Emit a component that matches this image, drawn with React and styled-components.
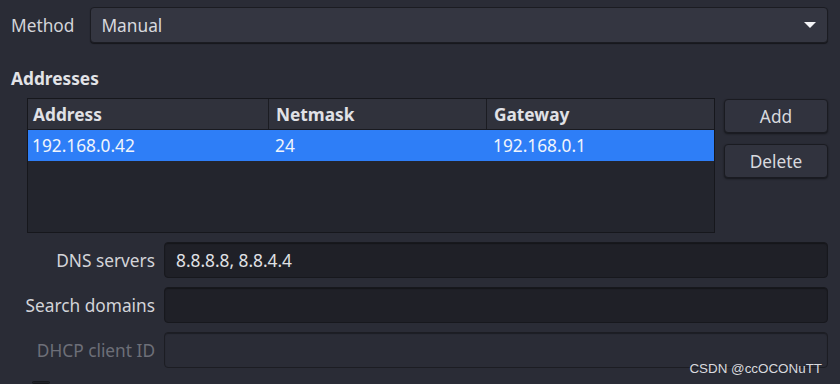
import React from 'react'
import styled, {createGlobalStyle} from 'styled-components'

const GlobalStyle = createGlobalStyle`
  html, body {
    margin: 0;
    padding: 0;
    background: #2a2c36;
  }
  * { box-sizing: border-box; }
`;

const Page = styled.div`
  position: relative;
  width: 840px;
  height: 384px;
  overflow: hidden;
  background: #2a2c36;
  color: #d6d7dc;
  font-family: "Noto Sans", "Open Sans", sans-serif;
  font-size: 17.3px;
  padding: 7px 12px 0 11px;
  display: flex;
  flex-direction: column;
`;

const MethodRow = styled.div`
  display: flex;
  flex-direction: row;
  align-items: center;
  gap: 16px;
`;

const Label = styled.span`
  color: ${p => (p.disabled ? '#6d6f78' : '#d3d4d9')};
  white-space: nowrap;
`;

const Combo = styled.div`
  flex: 1;
  height: 36px;
  display: flex;
  align-items: center;
  justify-content: space-between;
  padding: 0 10px;
  background: #343641;
  border: 1px solid #1b1c22;
  border-radius: 4px;
  box-shadow: 0 1px 1px rgba(0, 0, 0, 0.5);
  color: #d8d9de;
`;

const Arrow = styled.svg`
  width: 14px;
  height: 8px;
`;

const SectionTitle = styled.div`
  margin-top: 24px;
  font-weight: bold;
  color: #e2e3e7;
  line-height: 23px;
`;

const AddressArea = styled.div`
  display: flex;
  flex-direction: row;
  gap: 9px;
  margin-top: 8px;
  padding-left: 16px;
`;

const Table = styled.div`
  width: 688px;
  height: 135px;
  background: #23252d;
  border: 1px solid #16171c;
  display: flex;
  flex-direction: column;
`;

const HeaderRow = styled.div`
  display: grid;
  grid-template-columns: 240px 218px 1fr;
  height: 31px;
  background: #30323c;
  border-bottom: 1px solid #191a20;
`;

const HeaderCell = styled.div`
  display: flex;
  align-items: center;
  font-weight: bold;
  color: #e0e1e6;
  border-left: ${p => (p.first ? 'none' : '1px solid #1b1c22')};
  padding-left: ${p => (p.first ? '5px' : '7px')};
`;

const DataRow = styled.div`
  display: grid;
  grid-template-columns: 240px 218px 1fr;
  height: 31px;
  background: ${p => (p.selected ? '#2e7ef7' : 'transparent')};
  color: ${p => (p.selected ? '#f0f4fb' : '#d6d7dc')};
`;

const Cell = styled.div`
  display: flex;
  align-items: center;
  padding-left: ${p => (p.first ? '4px' : '7px')};
`;

const ButtonColumn = styled.div`
  display: flex;
  flex-direction: column;
  gap: 11px;
  padding-top: 1px;
`;

const Button = styled.div`
  width: 104px;
  height: 34px;
  display: flex;
  align-items: center;
  justify-content: center;
  background: #31333e;
  border: 1px solid #1a1b21;
  border-radius: 4px;
  box-shadow: 0 1px 2px rgba(0, 0, 0, 0.5);
  color: #d8d9de;
`;

const Form = styled.div`
  display: grid;
  grid-template-columns: 144px 1fr;
  column-gap: 9px;
  row-gap: 9px;
  margin-top: 9px;
  align-items: center;
`;

const FormLabel = styled(Label)`
  text-align: right;
`;

const Field = styled.div`
  height: 36px;
  display: flex;
  align-items: center;
  padding: 0 11px;
  border-radius: 4px;
  background: ${p => (p.disabled ? '#2a2c36' : '#1f2027')};
  border: 1px solid ${p => (p.disabled ? '#1c1d23' : '#17181d')};
  box-shadow: inset 0 1px 1px rgba(0, 0, 0, 0.35);
  color: #e0e1e5;
`;

const Checkbox = styled.div`
  width: 18px;
  height: 18px;
  margin: 13px 0 0 21px;
  border: 1px solid #17181d;
  border-radius: 3px;
  background: #1f2027;
`;

const Watermark = styled.div`
  position: absolute;
  right: 18px;
  bottom: 8px;
  font-family: "Liberation Sans", Arial, sans-serif;
  font-size: 13.4px;
  color: #d9dadf;
`;

const columns = ['Address', 'Netmask', 'Gateway'];
const rows = [['192.168.0.42', '24', '192.168.0.1']];

const fields = [
  {label: 'DNS servers', value: '8.8.8.8, 8.8.4.4'},
  {label: 'Search domains', value: ''},
  {label: 'DHCP client ID', value: '', disabled: true},
];

export default function App() {
  return (
    <Page>
      <GlobalStyle />
      <MethodRow>
        <Label>Method</Label>
        <Combo>
          Manual
          <Arrow viewBox="0 0 14 8">
            <path d="M1 1 L13 1 L7 7 Z" fill="#f4f5f7" />
          </Arrow>
        </Combo>
      </MethodRow>
      <SectionTitle>Addresses</SectionTitle>
      <AddressArea>
        <Table>
          <HeaderRow>
            {columns.map((c, i) => (
              <HeaderCell key={c} first={i === 0}>{c}</HeaderCell>
            ))}
          </HeaderRow>
          {rows.map((r, ri) => (
            <DataRow key={ri} selected>
              {r.map((v, i) => (
                <Cell key={i} first={i === 0}>{v}</Cell>
              ))}
            </DataRow>
          ))}
        </Table>
        <ButtonColumn>
          <Button>Add</Button>
          <Button>Delete</Button>
        </ButtonColumn>
      </AddressArea>
      <Form>
        {fields.map(f => (
          <React.Fragment key={f.label}>
            <FormLabel disabled={f.disabled}>{f.label}</FormLabel>
            <Field disabled={f.disabled}>{f.value}</Field>
          </React.Fragment>
        ))}
      </Form>
      <Checkbox />
      <Watermark>CSDN @ccOCONuTT</Watermark>
    </Page>
  );
}
